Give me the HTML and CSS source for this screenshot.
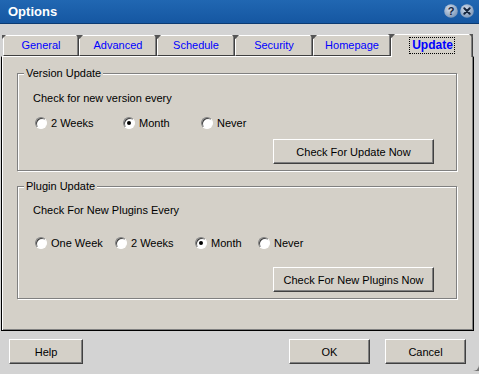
FILE: index.html
```html
<!DOCTYPE html>
<html lang="en">
<head>
  <meta charset="UTF-8" />
  <title>Options</title>
  <link rel="stylesheet" href="styles.css">
</head>
<body>
  <div class="window">
    <div class="titlebar">
      <span class="title">Options</span>
      <div class="title-buttons">
        <svg class="tbtn" width="14" height="14" viewBox="0 0 14 14">
          <defs>
            <radialGradient id="ball" cx="40%" cy="35%" r="65%">
              <stop offset="0" stop-color="#d3deec"/>
              <stop offset="1" stop-color="#7e98b9"/>
            </radialGradient>
          </defs>
          <circle cx="7" cy="7" r="6.8" fill="url(#ball)"/>
          <text x="7" y="11" text-anchor="middle" class="tbtn-glyph">?</text>
        </svg>
        <svg class="tbtn" width="14" height="14" viewBox="0 0 14 14">
          <circle cx="7" cy="7" r="6.8" fill="url(#ball)"/>
          <path d="M4.3 4.3 L9.7 9.7 M9.7 4.3 L4.3 9.7" stroke="#14243c" stroke-width="2" stroke-linecap="round"/>
        </svg>
      </div>
    </div>

    <div class="content">
      <div class="tabs">
        <div class="tab first">General</div>
        <div class="tab">Advanced</div>
        <div class="tab">Schedule</div>
        <div class="tab">Security</div>
        <div class="tab">Homepage</div>
        <div class="tab active"><span class="focus">Update</span></div>
      </div>

      <div class="panel">
        <div class="group version">
          <div class="group-title">Version Update</div>
          <p class="prompt">Check for new version every</p>
          <div class="choices version-choices">
            <label class="choice"><span class="radio"></span>2 Weeks</label>
            <label class="choice"><span class="radio checked"></span>Month</label>
            <label class="choice"><span class="radio"></span>Never</label>
          </div>
          <div class="actions">
            <button class="btn wide">Check For Update Now</button>
          </div>
        </div>

        <div class="group plugin">
          <div class="group-title">Plugin Update</div>
          <p class="prompt">Check For New Plugins Every</p>
          <div class="choices plugin-choices">
            <label class="choice"><span class="radio"></span>One Week</label>
            <label class="choice"><span class="radio"></span>2 Weeks</label>
            <label class="choice"><span class="radio checked"></span>Month</label>
            <label class="choice"><span class="radio"></span>Never</label>
          </div>
          <div class="actions">
            <button class="btn wide">Check For New Plugins Now</button>
          </div>
        </div>
      </div>

      <div class="footer">
        <button class="btn help">Help</button>
        <div class="spacer"></div>
        <button class="btn">OK</button>
        <button class="btn">Cancel</button>
      </div>
    </div>
  </div>
</body>
</html>
```

FILE: styles.css
```css
body {
  margin: 0;
  background: #d3d3d3;
  font-family: "Liberation Sans", Arial, sans-serif;
  font-size: 11px;
  color: #000;
}

.window {
  width: 479px;
  height: 371px;
  background: #d3d3d3;
  border-bottom-right-radius: 6px;
  box-shadow: 5px 2px 2px rgba(0, 0, 0, 0.45);
}

/* title bar */
.titlebar {
  height: 23px;
  border-bottom: 1px solid #0b3a72;
  background: linear-gradient(#2167b2, #1557a2);
  display: flex;
  align-items: center;
  justify-content: space-between;
  padding: 0 5px 0 8px;
}

.title {
  color: #fff;
  font-weight: bold;
  font-size: 13px;
  margin-top: -1px;
}

.title-buttons {
  display: flex;
  gap: 2px;
  margin-top: -2px;
}

.tbtn-glyph {
  font-family: "Liberation Sans", Arial, sans-serif;
  font-weight: bold;
  font-size: 11px;
  fill: #14243c;
}

/* tabs */
.content {
  padding-top: 10px;
}

.tabs {
  display: flex;
  align-items: flex-end;
  height: 22px;
  padding-left: 3px;
}

.tab {
  position: relative;
  box-sizing: border-box;
  width: 78px;
  height: 21px;
  background: #d4d0c8;
  border-top: 1px solid #fff;
  border-left: 1px solid #fff;
  border-right: 1px solid #404040;
  border-bottom: 1px solid #404040;
  box-shadow: inset -1px 0 #808080;
  color: #0000ff;
  display: flex;
  align-items: center;
  justify-content: center;
  padding-bottom: 1px;
}

.tab::before {
  content: "";
  position: absolute;
  left: -4px;
  top: -1px;
  width: 7px;
  height: 4px;
  background: #555;
  clip-path: polygon(0 0, 100% 0, 50% 100%);
}

.tab.first {
  width: 76px;
}

.tab.first::before {
  left: -2px;
  width: 4px;
  clip-path: polygon(0 0, 100% 0, 0 100%);
}

.tab.active {
  width: 82px;
  height: 23px;
  margin-bottom: -1px;
  border-bottom: none;
  z-index: 1;
  padding-bottom: 2px;
  font-weight: bold;
  font-size: 12px;
}

.tab.active::after {
  content: "";
  position: absolute;
  right: -1px;
  top: -1px;
  width: 4px;
  height: 4px;
  background: #555;
  clip-path: polygon(0 0, 100% 0, 100% 100%);
}

.focus {
  outline: 1px dotted #000;
  padding: 1px 1px 1px 2px;
  line-height: 13px;
}

/* tab page */
.panel {
  box-sizing: border-box;
  width: 473px;
  height: 275px;
  margin-left: 1px;
  background: #d4d0c8;
  border-top: 1px solid #fff;
  border-left: 1px solid #000;
  border-right: 1px solid #000;
  border-bottom: 1px solid #000;
  box-shadow: inset 1px 0 #fff, inset -1px -1px #808080;
  padding-top: 16px;
}

.group {
  width: 440px;
  box-sizing: border-box;
  margin-left: 15px;
  border: 1px solid #808080;
  box-shadow: inset 1px 1px #fff, 1px 1px #fff;
  padding: 0 0 6px 15px;
}

.group.plugin {
  margin-top: 15px;
}

.group-title {
  width: fit-content;
  margin: -8px 0 0 -9px;
  padding: 0 2px;
  line-height: 14px;
  background: #d4d0c8;
}

.prompt {
  margin: 11px 0 0;
  line-height: 14px;
}

.plugin .prompt {
  margin-top: 10px;
}

.choices {
  display: grid;
  margin-top: 11px;
  padding-left: 2px;
}

.version-choices {
  grid-template-columns: 88px 78px auto;
}

.plugin-choices {
  margin-top: 19px;
  grid-template-columns: 80px 80px 63px auto;
}

.choice {
  display: flex;
  align-items: center;
  gap: 4px;
  height: 14px;
}

.radio {
  position: relative;
  box-sizing: border-box;
  width: 12px;
  height: 12px;
  border-radius: 50%;
  background: #fff;
  border: 1px solid;
  border-color: #808080 #fff #fff #808080;
  box-shadow: inset 1px 1px #404040;
}

.radio.checked::after {
  content: "";
  position: absolute;
  left: 3px;
  top: 3px;
  width: 4px;
  height: 4px;
  border-radius: 50%;
  background: #000;
}

.actions {
  display: flex;
  justify-content: flex-end;
  margin: 9px 22px 0 0;
}

.plugin .actions {
  margin-top: 17px;
}

/* buttons */
.btn {
  box-sizing: border-box;
  height: 25px;
  width: 81px;
  padding: 0;
  background: #d4d0c8;
  border: 1px solid;
  border-color: #fff #404040 #404040 #fff;
  box-shadow: inset -1px -1px #808080;
  font-family: "Liberation Sans", Arial, sans-serif;
  font-size: 11px;
  color: #000;
}

.btn.wide {
  width: 161px;
}

.footer {
  display: flex;
  gap: 15px;
  padding: 8px 13px 0 9px;
}

.btn.help {
  width: 74px;
}

.spacer {
  flex: 1;
}
```
